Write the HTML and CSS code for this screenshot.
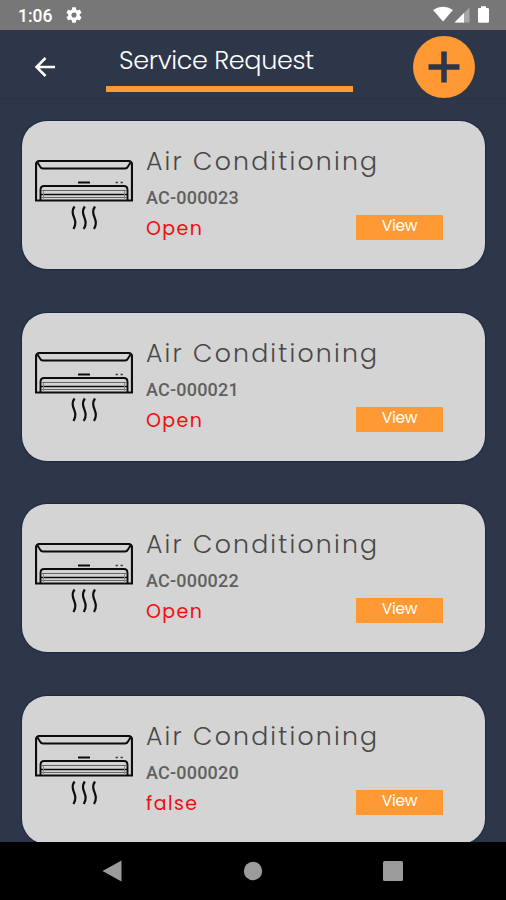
FILE: index.html
```html
<!DOCTYPE html>
<html lang="en">
<head>
    <meta charset="UTF-8">
    <meta name="viewport" content="width=device-width, initial-scale=1.0">
    <title>Service Request</title>
    <link rel="stylesheet" href="styles.css">
</head>
<body>
    <!-- Shared icon -->
    <svg class="icon-defs" width="0" height="0">
        <symbol id="ac-icon" viewBox="0 0 98 72">
            <g fill="none" stroke="#0c0c0c">
                <path d="M1 40.500V5Q1 1 5 1H93Q97 1 97 5V40.500Z" stroke-width="2.200"/>
                <path d="M2.500 2.500L5 6.500Q6 8.500 8 8.500H90Q92 8.500 93 6.500L95.500 2.500" stroke-width="1.900"/>
                <path d="M43 22.500H55" stroke-width="2"/>
                <path d="M80.500 22.500H83M85.500 22.500H88" stroke-width="1.300" stroke="#444"/>
                <path d="M5.500 40V30Q5.500 26 9 26H89Q92.500 26 92.500 30V40" stroke-width="1.900"/>
                <path d="M6 30.500H92M6 37.500H92" stroke-width="1" stroke="#666"/>
                <path d="M6 34.500H92" stroke-width="1.700"/>
                <path d="M8.500 31V40M89.500 31V40" stroke-width="1" stroke="#888"/>
                <path d="M39.500 46.500C33.500 55 44.500 59 38.500 69M49.800 46.500C43.800 55 54.800 59 48.800 69M60 46.500C54 55 65 59 59 69" stroke-width="2.200"/>
            </g>
        </symbol>
    </svg>

    <div class="phone">
        <div class="status-bar">
            <span class="time">1:06</span>
            <svg class="gear" width="16" height="16" viewBox="2 2 20 20">
                <path fill="#fff" d="M19.140 12.940c.04-.3.06-.61.06-.94s-.02-.64-.07-.94l2.030-1.580c.18-.14.23-.41.12-.61l-1.920-3.320c-.12-.22-.37-.29-.59-.22l-2.390.96c-.5-.38-1.030-.7-1.620-.94l-.36-2.540c-.04-.24-.24-.41-.48-.41h-3.840c-.24 0-.43.17-.47.41l-.36 2.540c-.59.24-1.130.57-1.620.94l-2.390-.96c-.22-.08-.47 0-.59.22L2.740 8.870c-.12.21-.08.47.12.61l2.030 1.580c-.05.3-.09.63-.09.94s.02.64.07.94l-2.030 1.580c-.18.14-.23.41-.12.61l1.920 3.320c.12.22.37.29.59.22l2.390-.96c.5.38 1.030.7 1.620.94l.36 2.540c.05.24.24.41.48.41h3.840c.24 0 .44-.17.47-.41l.36-2.540c.59-.24 1.130-.56 1.620-.94l2.390.96c.22.08.47 0 .59-.22l1.920-3.320c.12-.22.07-.47-.12-.61zM12 15.200A3.200 3.200 0 1 1 12 8.800a3.200 3.200 0 0 1 0 6.400z"/>
            </svg>
            <svg class="system-icons" width="58" height="18" viewBox="0 0 58 18">
                <path fill="#fff" d="M0 4Q10 -2.500 20 4L10 15.500Z"/>
                <path fill="#a6a6a6" d="M21.500 16.500L36.500 1.500V16.500Z"/>
                <path fill="#fff" d="M21.500 16.500L31 7V16.500Z"/>
                <path fill="#fff" d="M45 3Q45 2 46.200 2H48V.3H53V2H54.700Q56 2 56 3V15.500Q56 16.800 54.700 16.800H46.200Q45 16.800 45 15.500Z"/>
            </svg>
        </div>

        <header class="header">
            <svg class="back" width="22" height="22" viewBox="0 0 22 22">
                <path d="M21 11H2.500M11.500 2L2.500 11L11.500 20" fill="none" stroke="#fff" stroke-width="2.500"/>
            </svg>
            <h1 class="title">Service Request</h1>
            <button class="add-btn" aria-label="Add">
                <svg width="32" height="32" viewBox="0 0 32 32">
                    <path d="M16 .5V31.500M.5 16H31.500" stroke="#2e364a" stroke-width="5.500"/>
                </svg>
            </button>
        </header>

        <main class="requests">
            <div class="card">
                <svg class="ac" width="98" height="72"><use href="#ac-icon"/></svg>
                <div class="info">
                    <h2>Air Conditioning</h2>
                    <p class="code">AC-000023</p>
                    <p class="state">Open</p>
                </div>
                <button class="view-btn">View</button>
            </div>
            <div class="card">
                <svg class="ac" width="98" height="72"><use href="#ac-icon"/></svg>
                <div class="info">
                    <h2>Air Conditioning</h2>
                    <p class="code">AC-000021</p>
                    <p class="state">Open</p>
                </div>
                <button class="view-btn">View</button>
            </div>
            <div class="card">
                <svg class="ac" width="98" height="72"><use href="#ac-icon"/></svg>
                <div class="info">
                    <h2>Air Conditioning</h2>
                    <p class="code">AC-000022</p>
                    <p class="state">Open</p>
                </div>
                <button class="view-btn">View</button>
            </div>
            <div class="card">
                <svg class="ac" width="98" height="72"><use href="#ac-icon"/></svg>
                <div class="info">
                    <h2>Air Conditioning</h2>
                    <p class="code">AC-000020</p>
                    <p class="state">false</p>
                </div>
                <button class="view-btn">View</button>
            </div>
        </main>

        <nav class="nav-bar">
            <svg width="20" height="22" viewBox="0 0 20 22"><path d="M.5 11L19.500 .5V21.500Z" fill="#9b9b9b"/></svg>
            <svg width="20" height="20" viewBox="0 0 20 20"><circle cx="10" cy="10" r="9.200" fill="#9b9b9b"/></svg>
            <svg width="20" height="20" viewBox="0 0 20 20"><rect width="20" height="20" rx="1.500" fill="#9b9b9b"/></svg>
        </nav>
    </div>
</body>
</html>
```
FILE: styles.css
```css
:root {
    --navy: #2e364a;
    --orange: #ff9933;
}

* {
    box-sizing: border-box;
    margin: 0;
    padding: 0;
}

body {
    font-family: Poppins, Inter, sans-serif;
    background: var(--navy);
}

button {
    border: none;
    font-family: inherit;
}

.icon-defs {
    display: block;
}

.phone {
    display: flex;
    flex-direction: column;
    width: 506px;
    height: 900px;
    overflow: hidden;
}

.status-bar {
    display: flex;
    flex: none;
    align-items: center;
    height: 30px;
    padding: 0 15px 0 18px;
    background: #777;
}

.time {
    width: 48px;
    padding-top: 1px;
    font: 500 17.5px/28px Roboto, sans-serif;
    color: #fff;
}

.system-icons {
    margin-left: auto;
}

.header {
    display: flex;
    flex: none;
    height: 69px;
    padding: 6px 31px 0 34px;
    border-bottom: 1px solid #293247;
}

.back {
    margin-top: 20px;
}

.title {
    width: 247px;
    height: 56px;
    margin-left: 50px;
    padding-left: 13px;
    border-bottom: 6px solid var(--orange);
    font-size: 25.5px;
    font-weight: 300;
    line-height: 49px;
    letter-spacing: -0.35px;
    white-space: nowrap;
    color: #fff;
}

.add-btn {
    display: flex;
    align-items: center;
    justify-content: center;
    width: 62px;
    height: 62px;
    margin-left: auto;
    border-radius: 50%;
    background: var(--orange);
}

.requests {
    display: flex;
    flex: 1;
    flex-direction: column;
    gap: 43.7px;
    min-height: 0;
    padding: 22px 21px 0 22px;
    overflow: hidden;
}

.card {
    display: flex;
    flex: none;
    height: 148px;
    padding: 0 42px 0 13px;
    border-radius: 25px;
    background: #d4d4d4;
    box-shadow: 0 0 1px 1px #1d2945;
}

.ac {
    flex: none;
    margin-top: 39px;
}

.info {
    flex: 1;
    min-width: 0;
    padding: 23px 0 0 13px;
    white-space: nowrap;
}

.info h2 {
    font-size: 25.2px;
    font-weight: 300;
    line-height: 36px;
    letter-spacing: 2.2px;
    color: #484848;
}

.code {
    font: 500 18px/36px Roboto, sans-serif;
    letter-spacing: 0.2px;
    color: #606060;
}

.state {
    font-size: 19px;
    line-height: 26px;
    letter-spacing: 1.4px;
    color: #f20d14;
}

.view-btn {
    flex: none;
    width: 87px;
    height: 25px;
    margin-top: 94px;
    padding-bottom: 3px;
    background: var(--orange);
    font-size: 15.5px;
    line-height: 22px;
    letter-spacing: -0.3px;
    color: #fff;
}

.nav-bar {
    display: flex;
    flex: none;
    align-items: center;
    justify-content: space-between;
    height: 58px;
    padding: 0 103px 0 102px;
    background: #000;
}
```
